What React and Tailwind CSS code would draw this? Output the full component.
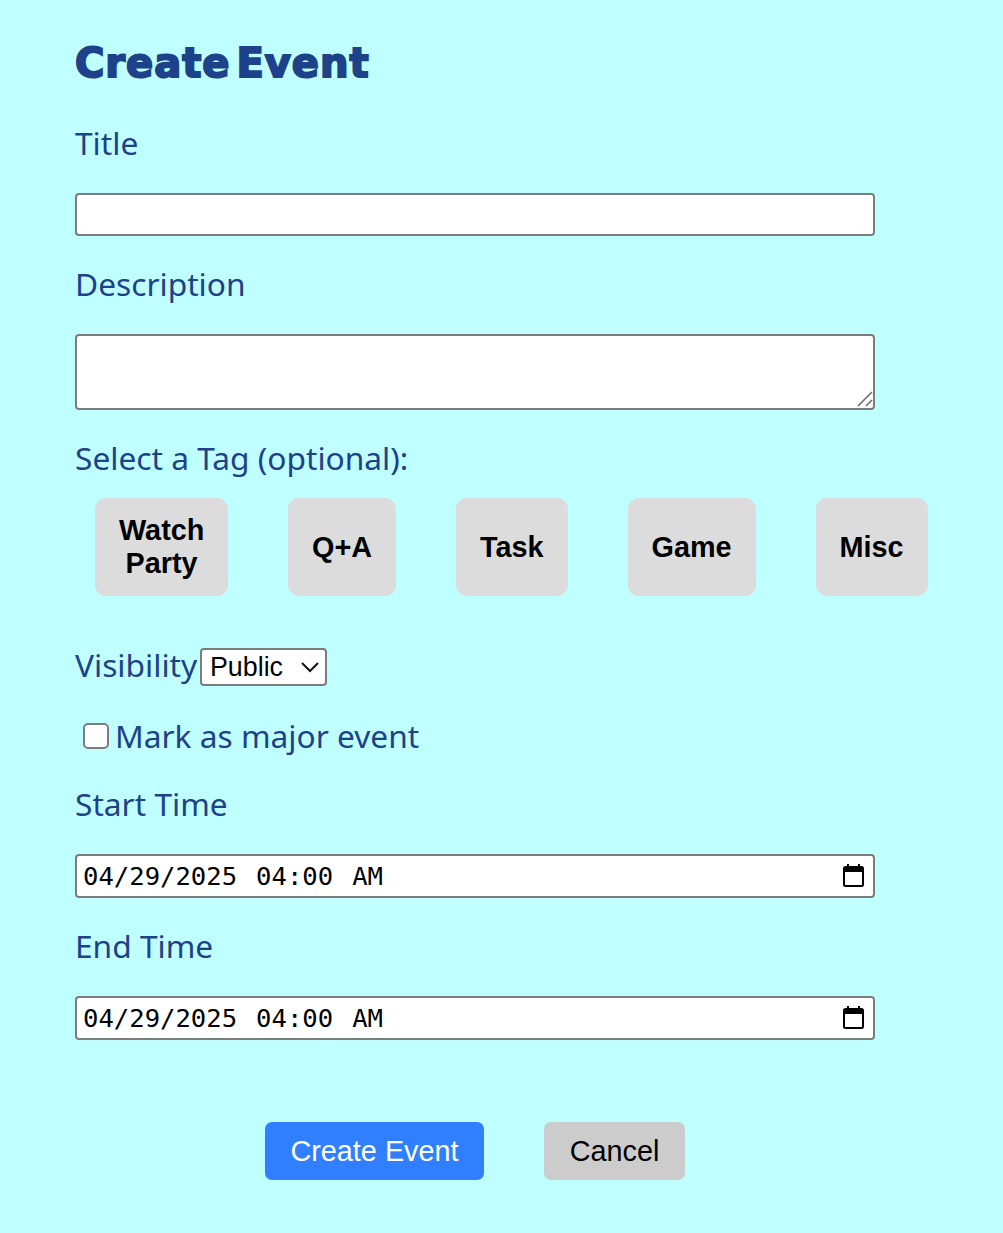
import React from 'react'

const tags = ['Watch Party', 'Q+A', 'Task', 'Game', 'Misc']
const labelCls = "block text-[31.7px] leading-[36px] text-[#1e4289] [font-family:'Noto_Sans',sans-serif]"
const inputCls = "block w-[800px] border-2 border-[#7c7c7c] rounded-[4px] bg-white"

function CalendarIcon() {
  return (
    <svg width="23" height="25" viewBox="0 0 23 25" className="absolute right-[10px] top-[9px]">
      <rect x="2" y="4" width="19" height="19" rx="1.5" fill="#fff" stroke="#000" strokeWidth="2" />
      <rect x="2" y="4" width="19" height="5" fill="#000" />
      <rect x="5" y="1" width="2" height="4" fill="#000" />
      <rect x="16" y="1" width="2" height="4" fill="#000" />
    </svg>
  )
}

function DateField({ value }) {
  return (
    <div className="relative w-[800px] mt-[32px]">
      <input
        defaultValue={value}
        className="block w-full h-[44px] border-2 border-[#7c7c7c] rounded-[4px] bg-white pl-[6px] pr-[40px] text-[25.6px] text-black [word-spacing:3.6px] [font-family:'DejaVu_Sans_Mono',monospace]"
      />
      <CalendarIcon />
    </div>
  )
}

export default function App() {
  return (
    <div className="min-h-[1233px] bg-[#c0ffff] pl-[75px] pt-[36px] [font-family:'Liberation_Sans',sans-serif]">
      <h1 className="text-[40px] leading-[54px] font-bold text-[#1e4289] [font-family:'DejaVu_Sans',sans-serif] tracking-[1px] [word-spacing:-9px] [-webkit-text-stroke:2px_#1e4289]">Create Event</h1>

      <label className={labelCls + " mt-[35px]"}>Title</label>
      <input className={inputCls + " h-[43px] mt-[32px]"} />

      <label className={labelCls + " mt-[30px]"}>Description</label>
      <div className="relative w-[800px] mt-[32px]">
        <textarea className={inputCls + " h-[76px] resize-none"} />
        <svg width="16" height="16" viewBox="0 0 16 16" className="absolute right-[2px] bottom-[3px]">
          <path d="M1 15 L15 1 M9 15 L15 9" stroke="#6e6e6e" strokeWidth="1.6" fill="none" />
        </svg>
      </div>

      <div className={labelCls + " mt-[30px]"}>Select a Tag (optional):</div>
      <div className="flex gap-[60px] pl-[20px] mt-[22px] items-stretch">
        {tags.map(t => (
          <button key={t} className="px-6 py-4 rounded-[11px] bg-[#dcdcdc] text-black font-bold text-[28.8px] leading-[33px] text-center max-w-[133px]">{t}</button>
        ))}
      </div>

      <div className="flex items-center mt-[52px] h-[38px]">
        <label className={labelCls + " w-[125px] pb-[4px]"}>Visibility</label>
        <div className="relative">
          <select className="block appearance-none h-[38px] w-[127px] border-2 border-[#7c7c7c] rounded-[4px] bg-white text-[26.8px] leading-[28px] text-black pl-[8px] pb-[1px]" defaultValue="Public">
            <option>Public</option>
            <option>Private</option>
          </select>
          <svg width="20" height="12" viewBox="0 0 20 12" className="absolute right-[7px] top-[13px] pointer-events-none">
            <path d="M2 2 L10 10 L18 2" stroke="#111" strokeWidth="2" fill="none" />
          </svg>
        </div>
      </div>

      <label className="flex items-center mt-[32px] h-[36px]">
        <input type="checkbox" className="appearance-none w-[26px] h-[26px] ml-[8px] mr-[6px] bg-white border-2 border-[#7c7c7c] rounded-[5px]" />
        <span className={labelCls}>Mark as major event</span>
      </label>

      <label className={labelCls + " mt-[32px]"}>Start Time</label>
      <DateField value="04/29/2025 04:00 AM" />

      <label className={labelCls + " mt-[30px]"}>End Time</label>
      <DateField value="04/29/2025 04:00 AM" />

      <div className="flex justify-center gap-[60px] w-[800px] mt-[82px]">
        <button className="h-[58px] w-[219px] pt-[2px] rounded-[7px] bg-[#2f7fff] text-white text-[28.8px]">Create Event</button>
        <button className="h-[58px] w-[141px] pt-[2px] rounded-[7px] bg-[#cccccc] text-black text-[28.8px]">Cancel</button>
      </div>
    </div>
  )
}
